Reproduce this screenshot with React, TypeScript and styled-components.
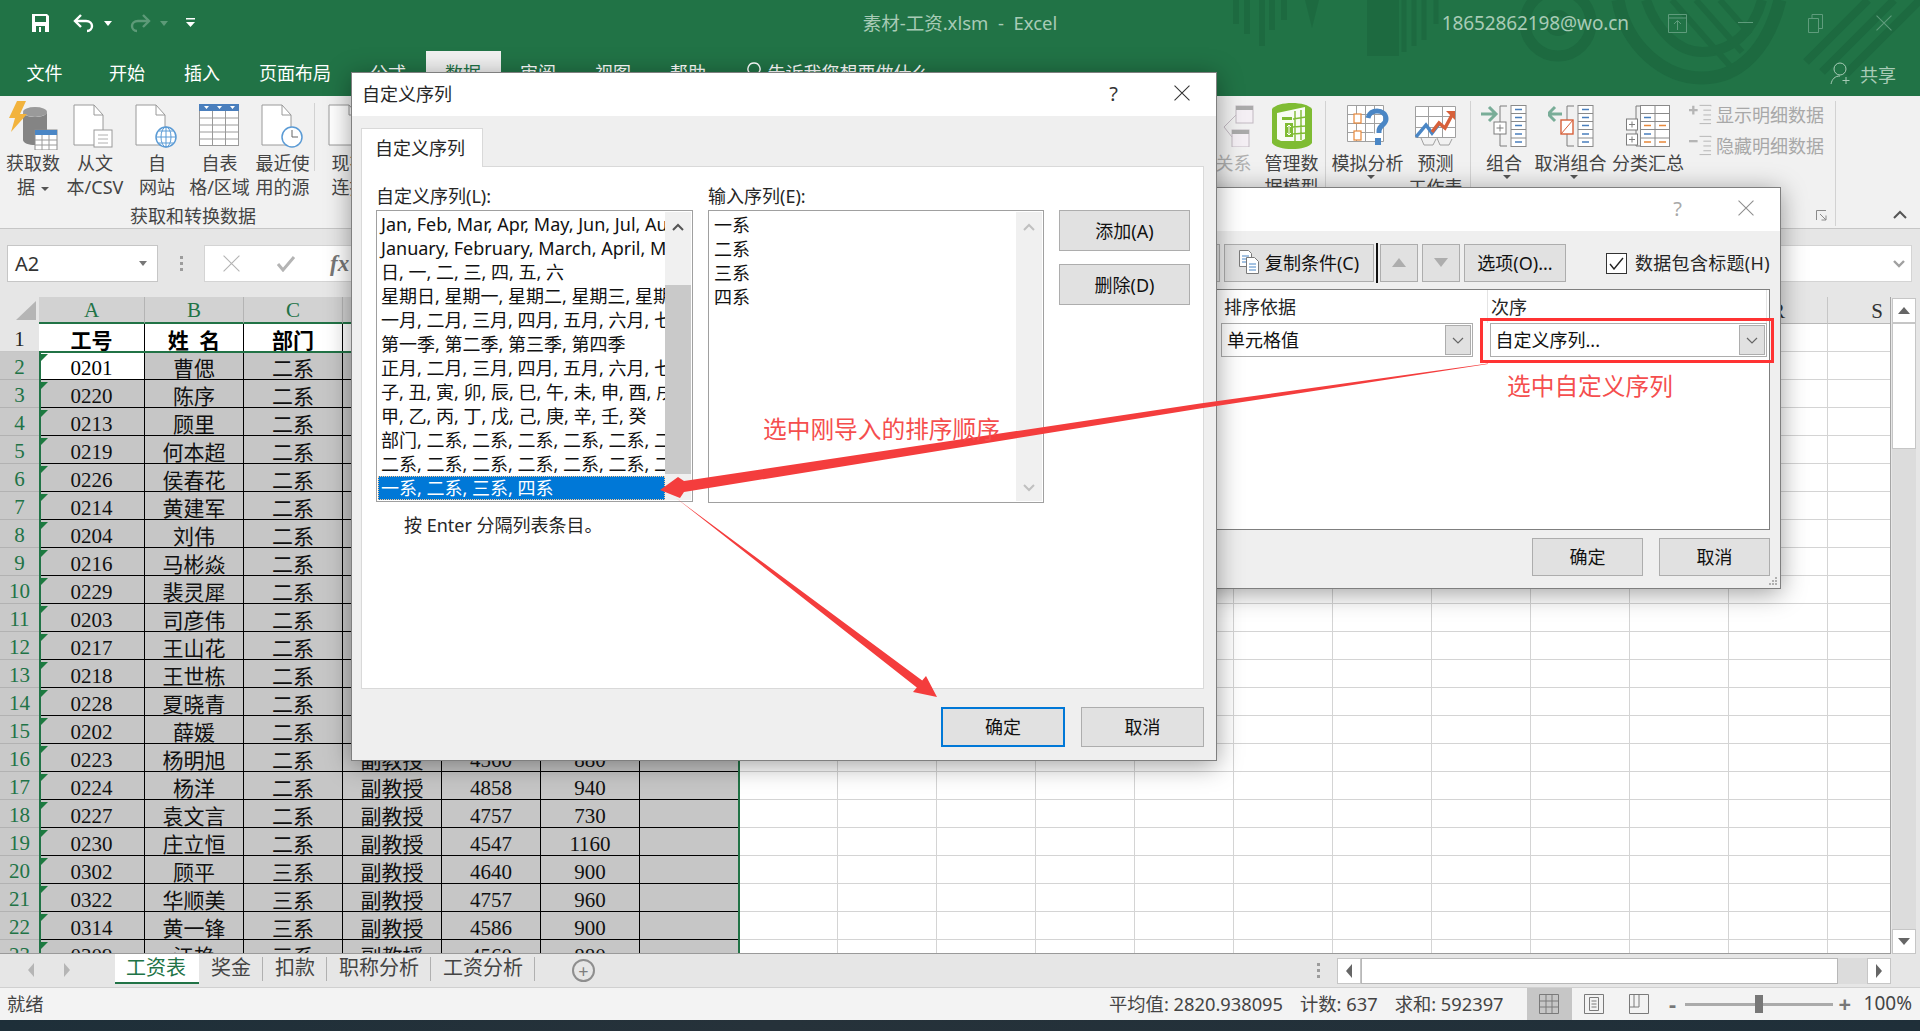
import React from "react";
import styled, { createGlobalStyle, css } from "styled-components";

const UI_FONT = `"Noto Sans", "Noto Sans CJK SC", sans-serif`;
const SHEET_FONT = `"Liberation Serif", "Noto Sans CJK SC", serif`;
const GREEN = "#217346";

const columns = ["A", "B", "C", "D", "E", "F", "G", "H", "I", "J", "K", "L", "M", "N", "O", "P", "Q", "R", "S"];

const rows = [
  ["0201", "曹偲", "二系", "", "", ""],
  ["0220", "陈序", "二系", "", "", ""],
  ["0213", "顾里", "二系", "", "", ""],
  ["0219", "何本超", "二系", "", "", ""],
  ["0226", "侯春花", "二系", "", "", ""],
  ["0214", "黄建军", "二系", "", "", ""],
  ["0204", "刘伟", "二系", "", "", ""],
  ["0216", "马彬焱", "二系", "", "", ""],
  ["0229", "裴灵犀", "二系", "", "", ""],
  ["0203", "司彦伟", "二系", "", "", ""],
  ["0217", "王山花", "二系", "", "", ""],
  ["0218", "王世栋", "二系", "", "", ""],
  ["0228", "夏晓青", "二系", "", "", ""],
  ["0202", "薛媛", "二系", "", "", ""],
  ["0223", "杨明旭", "二系", "副教授", "4560", "880"],
  ["0224", "杨洋", "二系", "副教授", "4858", "940"],
  ["0227", "袁文言", "二系", "副教授", "4757", "730"],
  ["0230", "庄立恒", "二系", "副教授", "4547", "1160"],
  ["0302", "顾平", "三系", "副教授", "4640", "900"],
  ["0322", "华顺美", "三系", "副教授", "4757", "960"],
  ["0314", "黄一锋", "三系", "副教授", "4586", "900"],
  ["0309", "江艳", "三系", "副教授", "4560", "880"],
];

const seriesList = [
  "Jan, Feb, Mar, Apr, May, Jun, Jul, Aug, Sep, Oct, Nov, Dec",
  "January, February, March, April, May, June, July",
  "日, 一, 二, 三, 四, 五, 六",
  "星期日, 星期一, 星期二, 星期三, 星期四, 星期五",
  "一月, 二月, 三月, 四月, 五月, 六月, 七月, 八月",
  "第一季, 第二季, 第三季, 第四季",
  "正月, 二月, 三月, 四月, 五月, 六月, 七月, 八月",
  "子, 丑, 寅, 卯, 辰, 巳, 午, 未, 申, 酉, 戌, 亥",
  "甲, 乙, 丙, 丁, 戊, 己, 庚, 辛, 壬, 癸",
  "部门, 二系, 二系, 二系, 二系, 二系, 二系, 二系",
  "二系, 二系, 二系, 二系, 二系, 二系, 二系, 二系",
  "一系, 二系, 三系, 四系",
];

const GlobalStyle = createGlobalStyle`
  html, body {
    margin: 0;
    padding: 0;
    background: #fff;
  }
  * {
    box-sizing: border-box;
  }
`;

const Page = styled.div`
  position: relative;
  display: flex;
  flex-direction: column;
  width: 1920px;
  height: 1031px;
  overflow: hidden;
  font-family: ${UI_FONT};
  font-size: 18px;
  color: #262626;
`;

/* ---------- green header ---------- */

const GreenHeader = styled.header`
  position: relative;
  height: 96px;
  background: ${GREEN};
`;

const HeaderPattern = styled.svg`
  position: absolute;
  right: 0;
  top: 0;
`;

const TitleBar = styled.div`
  position: relative;
  display: grid;
  grid-template-columns: 1fr auto 1fr;
  align-items: center;
  height: 46px;
`;

const QuickAccess = styled.div`
  display: flex;
  align-items: center;
  padding-left: 31px;
`;

const WindowTitle = styled.div`
  padding-bottom: 2px;
  font-size: 18.5px;
  white-space: pre;
  color: #a8cbb6;
`;

const WindowControls = styled.div`
  display: flex;
  align-items: center;
  justify-content: flex-end;
  color: #a8cbb6;
`;

const Account = styled.span`
  font-size: 19px;
  letter-spacing: -0.1px;
  margin-right: 39px;
`;

const MenuBar = styled.nav`
  position: relative;
  display: flex;
  align-items: flex-end;
  height: 50px;
  padding-left: 7px;
`;

const MenuItem = styled.div<{ $active?: boolean; $wide?: boolean }>`
  display: flex;
  align-items: center;
  height: 45px;
  padding: 0 ${(p) => (p.$wide ? 27 : 19.5)}px 3px 19.5px;
  font-size: 18px;
  color: #fff;
  ${(p) =>
    p.$active &&
    css`
      background: #f1f1f1;
      color: ${GREEN};
    `}
`;

const TellMe = styled.div`
  display: flex;
  align-items: center;
  gap: 4px;
  height: 45px;
  padding-bottom: 3px;
  margin-left: 18px;
  color: #fff;
`;

const Share = styled.div`
  display: flex;
  align-items: center;
  gap: 8px;
  height: 45px;
  margin-left: auto;
  padding-right: 24px;
  color: #a8cbb6;
`;

/* ---------- ribbon ---------- */

const Ribbon = styled.section`
  display: flex;
  height: 133px;
  background: #f1f1f1;
  border-bottom: 1px solid #c6c6c6;
`;

const RibbonGroup = styled.div`
  display: flex;
  flex-direction: column;
  padding-top: 4px;
`;

const RibbonButtons = styled.div`
  display: flex;
  height: 104px;
`;

const GroupLabel = styled.div`
  height: 24px;
  line-height: 24px;
  text-align: center;
  color: #444;
`;

const RibbonButton = styled.div<{ $width: number; $dim?: boolean }>`
  display: flex;
  flex-direction: column;
  align-items: center;
  width: ${(p) => p.$width}px;
  line-height: 24px;
  white-space: nowrap;
  color: ${(p) => (p.$dim ? "#b0b0b0" : "#444")};
`;

const RibbonIcon = styled.div`
  display: flex;
  align-items: center;
  justify-content: center;
  height: 51px;
`;

const DropCaret = styled.span`
  display: inline-block;
  width: 0;
  height: 0;
  margin-left: 6px;
  vertical-align: 3px;
  border-left: 4px solid transparent;
  border-right: 4px solid transparent;
  border-top: 4px solid #555;
`;

const RibbonSep = styled.div`
  align-self: flex-start;
  width: 1px;
  height: 125px;
  margin-top: 5px;
  background: #d2d2d2;
`;

const InnerSep = styled.div`
  flex: none;
  width: 1px;
  height: 68px;
  margin-top: 3px;
  background: #d2d2d2;
`;

const RibbonSpacer = styled.div`
  flex: 1;
`;

const OutlineColumn = styled.div`
  display: flex;
  flex-direction: column;
  gap: 7px;
  width: 135px;
  padding-top: 6px;
  color: #a8a8a8;
`;

const OutlineRow = styled.div`
  display: flex;
  align-items: center;
  gap: 4px;
  height: 24px;
  white-space: nowrap;
`;

const RibbonTail = styled.div`
  position: relative;
  display: flex;
  width: 84px;
`;

const TailIcon = styled.svg<{ $left: number }>`
  position: absolute;
  left: ${(p) => p.$left}px;
  top: 114px;
`;

/* ---------- formula bar ---------- */

const FormulaBar = styled.section`
  display: flex;
  height: 68px;
  padding: 16px 8px 15px 7px;
  background: #e6e6e6;
`;

const NameBox = styled.div`
  display: flex;
  align-items: center;
  justify-content: space-between;
  width: 151px;
  padding: 0 10px 0 7px;
  background: #fff;
  border: 1px solid #c6c6c6;
  font-size: 20px;
  color: #333;
`;

const TriangleDown = styled.span`
  width: 0;
  height: 0;
  border-left: 4px solid transparent;
  border-right: 4px solid transparent;
  border-top: 5px solid #777;
`;

const GripDots = styled.div`
  display: flex;
  flex-direction: column;
  align-items: center;
  justify-content: center;
  gap: 3px;
  width: 46px;
`;

const GripDot = styled.span`
  width: 3px;
  height: 3px;
  background: #9c9c9c;
`;

const FormulaInput = styled.div`
  display: flex;
  flex: 1;
  align-items: center;
  padding-left: 18px;
  background: #fff;
  border: 1px solid #d4d4d4;
`;

const FormulaFx = styled.span`
  margin-left: 34px;
  font-family: "Liberation Serif", serif;
  font-size: 23px;
  font-style: italic;
  font-weight: 700;
  color: #777;
`;

const FormulaChevron = styled.svg`
  margin-left: auto;
  margin-right: 6px;
`;

/* ---------- sheet ---------- */

const SheetArea = styled.section`
  display: flex;
  height: 657px;
  background: #e6e6e6;
`;

const GridWrap = styled.div`
  position: relative;
  width: 1891px;
  overflow: hidden;
  border-right: 1px solid #a6a6a6;
  border-bottom: 1px solid #9a9a9a;
`;

const Grid = styled.div`
  display: grid;
  grid-template-columns: 39px 106px repeat(18, 99px);
  grid-auto-rows: 28px;
  grid-template-rows: 27px;
  font-family: ${SHEET_FONT};
  font-size: 21px;
`;

const CornerCell = styled.div`
  display: flex;
  align-items: flex-end;
  justify-content: flex-end;
  padding: 0 3px 4px 0;
  background: #e6e6e6;
`;

const ColHead = styled.div<{ $selected: boolean }>`
  display: flex;
  align-items: center;
  justify-content: center;
  padding-top: 2px;
  background: ${(p) => (p.$selected ? "#d2d2d2" : "#e6e6e6")};
  border-right: 1px solid ${(p) => (p.$selected ? "#b4b4b4" : "#c6c6c6")};
  border-bottom: ${(p) => (p.$selected ? `2px solid ${GREEN}` : "1px solid #b8b8b8")};
  color: ${(p) => (p.$selected ? GREEN : "#333")};
`;

const RowHead = styled.div<{ $selected: boolean }>`
  display: flex;
  align-items: center;
  justify-content: center;
  padding-top: 4px;
  background: ${(p) => (p.$selected ? "#c9c9c9" : "#e6e6e6")};
  border-bottom: 1px solid ${(p) => (p.$selected ? "#b2b2b2" : "#c6c6c6")};
  color: ${(p) => (p.$selected ? GREEN : "#222")};
`;

const Cell = styled.div<{ $kind: "plain" | "head" | "data" | "active"; $flag?: boolean; $num?: boolean }>`
  position: relative;
  display: flex;
  align-items: center;
  justify-content: center;
  padding-top: ${(p) => (p.$num ? 5 : 2)}px;
  white-space: nowrap;
  overflow: hidden;
  ${(p) => p.$kind === "plain" && css`
    background: #fff;
    border-right: 1px solid #d4d4d4;
    border-bottom: 1px solid #d4d4d4;
  `}
  ${(p) => p.$kind === "head" && css`
    background: #fff;
    border-right: 1px solid #000;
    font-weight: 700;
    color: #000;
  `}
  ${(p) => p.$kind === "data" && css`
    background: #c6c6c6;
    border-right: 1px solid #000;
    border-bottom: 1px solid #000;
    color: #111;
  `}
  ${(p) => p.$kind === "active" && css`
    background: #fff;
    border-right: 1px solid #000;
    border-bottom: 1px solid #000;
    color: #000;
  `}
  ${(p) => p.$flag && css`
    &::before {
      content: "";
      position: absolute;
      left: 2px;
      top: 2px;
      border-top: 7px solid #1c7a3f;
      border-right: 7px solid transparent;
    }
  `}
`;

const SelectionFrame = styled.div`
  position: absolute;
  left: 39px;
  top: 54px;
  width: 701px;
  height: 640px;
  border: 2px solid ${GREEN};
  pointer-events: none;
`;

const VScroll = styled.div`
  display: flex;
  flex-direction: column;
  width: 29px;
  padding: 1px 4px 0 1px;
`;

const ScrollButton = styled.div`
  display: flex;
  align-items: center;
  justify-content: center;
  height: 25px;
  background: #fff;
  border: 1px solid #c6c6c6;
`;

const VTrack = styled.div`
  flex: 1;
  background: #dcdcdc;
`;

const VThumb = styled.div`
  height: 126px;
  background: #fff;
  border: 1px solid #c6c6c6;
`;

const ArrowUp = styled.span`
  border-left: 6px solid transparent;
  border-right: 6px solid transparent;
  border-bottom: 7px solid #666;
`;

const ArrowDown = styled.span`
  border-left: 6px solid transparent;
  border-right: 6px solid transparent;
  border-top: 7px solid #666;
`;

/* ---------- sheet tabs ---------- */

const TabBar = styled.section`
  display: flex;
  align-items: flex-start;
  height: 33px;
  background: #e6e6e6;
`;

const TabNav = styled.div`
  display: flex;
  align-items: center;
  justify-content: space-between;
  width: 115px;
  height: 32px;
  padding: 0 45px 0 28px;
`;

const NavArrow = styled.span<{ $right?: boolean }>`
  border-top: 7px solid transparent;
  border-bottom: 7px solid transparent;
  ${(p) => (p.$right ? "border-left: 6px solid #b5b5b5;" : "border-right: 6px solid #b5b5b5;")}
`;

const SheetTab = styled.div<{ $active?: boolean }>`
  height: 30px;
  padding: 0 11px 0 12px;
  line-height: 27px;
  font-size: 20px;
  white-space: nowrap;
  ${(p) =>
    p.$active
      ? css`
          width: 84px;
          padding: 0 11px;
          background: #fff;
          border-bottom: 2px solid ${GREEN};
          color: ${GREEN};
        `
      : css`
          margin-top: 3px;
          height: 24px;
          line-height: 22px;
          border-right: 1px solid #b0b0b0;
          color: #444;
        `}
`;

const AddSheet = styled.div`
  display: flex;
  align-items: center;
  justify-content: center;
  width: 23px;
  height: 23px;
  margin: 5px 0 0 37px;
  border: 2px solid #8e8e8e;
  border-radius: 50%;
  font-size: 18px;
  line-height: 1;
  color: #7d7d7d;
`;

const TabSplit = styled.div`
  display: flex;
  flex-direction: column;
  gap: 3px;
  margin: 9px 17px 0 auto;
`;

const HScroll = styled.div`
  display: flex;
  width: 554px;
  height: 26px;
  margin: 4px 29px 0 0;
  background: #dcdcdc;
`;

const HButton = styled.div`
  display: flex;
  align-items: center;
  justify-content: center;
  width: 24px;
  background: #fff;
  border: 1px solid #c6c6c6;
`;

const HThumb = styled.div`
  width: 477px;
  background: #fff;
  border: 1px solid #b8b8b8;
`;

const HTrackRest = styled.div`
  flex: 1;
`;

/* ---------- status bar ---------- */

const StatusBar = styled.footer`
  display: flex;
  align-items: center;
  height: 33px;
  padding: 0 0 3px 7px;
  background: #f3f3f3;
  border-top: 1px solid #d0d0d0;
  font-size: 18.3px;
  color: #444;
`;

const StatusStat = styled.span<{ $first?: boolean }>`
  margin-left: ${(p) => (p.$first ? "auto" : "17px")};
  white-space: nowrap;
`;

const ViewButton = styled.div<{ $active?: boolean; $first?: boolean }>`
  display: flex;
  align-items: center;
  justify-content: center;
  width: 45px;
  height: 32px;
  margin-bottom: -3px;
  margin-left: ${(p) => (p.$first ? "23px" : "0")};
  background: ${(p) => (p.$active ? "#c6c6c6" : "transparent")};
`;

const ZoomSign = styled.span`
  width: 12px;
  text-align: center;
  font-size: 22px;
  font-weight: 700;
  color: #777;
`;

const ZoomSlider = styled.div`
  position: relative;
  width: 148px;
  height: 3px;
  margin: 3px 6px 0;
  background: #aaa;
`;

const ZoomThumb = styled.span`
  position: absolute;
  left: 70px;
  top: -8px;
  width: 8px;
  height: 18px;
  background: #777;
`;

const ZoomValue = styled.span`
  margin: 0 8px 0 13px;
  font-size: 19px;
`;

const Taskbar = styled.div`
  display: flex;
  justify-content: flex-end;
  height: 11px;
  padding: 7px 7px 0 0;
  overflow: hidden;
  background: linear-gradient(90deg, #1e2f39 0%, #26323a 40%, #1f2f39 100%);
  font-size: 15px;
  line-height: 18px;
  color: #e8e8e8;
`;

const Clock = styled.span`
  margin-right: 116px;
`;

/* ---------- dialogs ---------- */

const Dialog = styled.div<{ $left: number; $top: number; $width: number; $height: number }>`
  position: absolute;
  left: ${(p) => p.$left}px;
  top: ${(p) => p.$top}px;
  width: ${(p) => p.$width}px;
  height: ${(p) => p.$height}px;
  display: flex;
  flex-direction: column;
  background: #efefef;
  border: 1px solid #7f7f7f;
  box-shadow: 0 4px 24px rgba(0, 0, 0, 0.38);
`;

const DialogHead = styled.div`
  display: flex;
  align-items: center;
  flex: none;
  height: 43px;
  padding: 0 26px 3px 10px;
  background: #fff;
  font-size: 18px;
  color: #262626;
`;

const HelpMark = styled.span<{ $dim?: boolean }>`
  margin-left: auto;
  margin-right: 56px;
  font-size: 20px;
  color: ${(p) => (p.$dim ? "#a9a9a9" : "#333")};
`;

const ListDialogBody = styled.div`
  display: flex;
  flex-direction: column;
  flex: 1;
  padding: 12px 12px 12px 9px;
`;

const TabHead = styled.div`
  width: 122px;
  height: 39px;
  padding-left: 13px;
  line-height: 38px;
  background: #fff;
  border: 1px solid #d9d9d9;
  border-bottom: 0;
  position: relative;
  z-index: 1;
`;

const TabPanel = styled.div`
  height: 523px;
  margin-top: -1px;
  padding: 17px 12px 0 14px;
  background: #fff;
  border: 1px solid #d9d9d9;
`;

const ListsRow = styled.div`
  display: flex;
`;

const ListColumn = styled.div<{ $width: number }>`
  width: ${(p) => p.$width}px;
  margin-right: 15px;
`;

const FieldLabel = styled.div`
  height: 26px;
  line-height: 24px;
  color: #262626;
`;

const ListBox = styled.div<{ $height: number }>`
  display: flex;
  height: ${(p) => p.$height}px;
  padding: 1px;
  border: 1px solid #a0a0a0;
  background: #fff;
  overflow: hidden;
`;

const ListItems = styled.div`
  flex: 1;
  min-width: 0;
  overflow: hidden;
`;

const ListItem = styled.div<{ $selected?: boolean }>`
  height: 24px;
  padding-left: 3px;
  line-height: 25px;
  font-size: 18px;
  white-space: nowrap;
  overflow: hidden;
  color: ${(p) => (p.$selected ? "#fff" : "#111")};
  ${(p) =>
    p.$selected &&
    css`
      background: #0078d7;
      outline: 1px dotted #ffc890;
      outline-offset: -1px;
    `}
`;

const EntryItem = styled.div`
  height: 24px;
  padding-left: 4px;
  line-height: 26px;
  font-size: 18px;
  color: #111;
`;

const ListScroll = styled.div`
  display: flex;
  flex-direction: column;
  align-items: center;
  flex: none;
  width: 26px;
  background: #f0f0f0;
`;

const ListScrollGap = styled.div<{ $height: number; $pad: number }>`
  display: flex;
  justify-content: center;
  align-items: flex-start;
  flex: none;
  width: 100%;
  height: ${(p) => p.$height}px;
  padding-top: ${(p) => p.$pad}px;
`;

const ListThumb = styled.div`
  flex: none;
  width: 100%;
  height: 189px;
  background: #c9c9c9;
`;

const ScrollRest = styled.div`
  flex: 1;
`;

const SideButtons = styled.div`
  display: flex;
  flex-direction: column;
  gap: 13px;
  padding-top: 26px;
`;

const PushButton = styled.div<{ $width: number; $height: number; $focus?: boolean }>`
  display: flex;
  align-items: center;
  justify-content: center;
  flex: none;
  gap: 6px;
  width: ${(p) => p.$width}px;
  height: ${(p) => p.$height}px;
  padding-bottom: 2px;
  background: #e1e1e1;
  border: ${(p) => (p.$focus ? "2px solid #0078d7" : "1px solid #adadad")};
  font-size: 18px;
  color: #111;
`;

const Hint = styled.div`
  padding: 9px 0 0 28px;
  font-size: 18px;
  color: #262626;
`;

const DialogFooter = styled.div<{ $gap: number; $pad: number }>`
  display: flex;
  justify-content: flex-end;
  gap: ${(p) => p.$gap}px;
  padding-top: ${(p) => p.$pad}px;
`;

const SortBody = styled.div`
  display: flex;
  flex-direction: column;
  flex: 1;
  padding: 13px 10px 0 0;
`;

const SortToolbar = styled.div`
  display: flex;
  align-items: center;
  gap: 4px;
  height: 38px;
  padding-left: 79px;
`;

const ToolSep = styled.div`
  width: 2px;
  height: 40px;
  margin: 0 -2px 0 -2px;
  background: #111;
`;

const CheckRow = styled.div`
  display: flex;
  align-items: center;
  gap: 8px;
  margin-left: 36px;
  padding-bottom: 2px;
  white-space: nowrap;
  letter-spacing: 0.3px;
  color: #262626;
`;

const CheckBox = styled.div`
  display: flex;
  align-items: center;
  justify-content: center;
  width: 21px;
  height: 21px;
  margin-top: 2px;
  background: #fff;
  border: 1px solid #333;
`;

const SortTable = styled.div`
  height: 241px;
  margin: 7px 0 0 210px;
  padding: 0 2px 0 9px;
  background: #fff;
  border: 1px solid #7f7f7f;
`;

const SortHeadRow = styled.div`
  display: flex;
  height: 33px;
  line-height: 34px;
`;

const SortHeadCell = styled.div<{ $width: number }>`
  width: ${(p) => p.$width}px;
  padding-left: 3px;
  border-right: 1px solid #e4e4e4;
`;

const SortSelects = styled.div`
  display: flex;
  gap: 17px;
`;

const SortSelect = styled.div<{ $width: number }>`
  display: flex;
  align-items: center;
  justify-content: space-between;
  width: ${(p) => p.$width}px;
  height: 34px;
  padding: 0 1px 0 5px;
  background: #fff;
  border: 1px solid #adadad;
  color: #111;
`;

const SelectValue = styled.span`
  padding-bottom: 3px;
`;

const SelectButton = styled.div`
  display: flex;
  align-items: center;
  justify-content: center;
  width: 26px;
  height: 30px;
  background: #e1e1e1;
  border: 1px solid #adadad;
`;

const ResizeGrip = styled.svg`
  position: absolute;
  right: 2px;
  bottom: 2px;
`;

/* ---------- annotations ---------- */

const ArrowLayer = styled.svg`
  position: absolute;
  left: 0;
  top: 0;
  pointer-events: none;
`;

const RedBox = styled.div`
  position: absolute;
  left: 1480px;
  top: 318px;
  width: 294px;
  height: 45px;
  border: 3px solid #f33;
`;

const RedNote = styled.div<{ $left: number; $top: number }>`
  position: absolute;
  left: ${(p) => p.$left}px;
  top: ${(p) => p.$top}px;
  font-size: 23.7px;
  line-height: 30px;
  white-space: nowrap;
  color: #f54e4e;
`;

/* ---------- icons ---------- */

const SaveIcon = () => (
  <svg width="19" height="20" viewBox="0 0 19 20" fill="none">
    <path d="M1 1h15l2 2v16H1z" fill="#fff" />
    <rect x="4" y="3" width="11" height="6" fill={GREEN} />
    <rect x="5" y="13" width="9" height="6" fill={GREEN} />
    <rect x="8" y="14" width="2" height="5" fill="#fff" />
  </svg>
);

const UndoIcon = ({ dim }: { dim?: boolean }) => (
  <svg width="24" height="20" viewBox="0 0 24 20" fill="none" stroke={dim ? "#5d9a78" : "#fff"} strokeWidth="2.4" style={{ transform: dim ? "scaleX(-1)" : undefined }}>
    <path d="M9 2 3 8l6 6" />
    <path d="M3 8h11c4 0 6 2.5 6 5s-2 5-5 5" />
  </svg>
);

const QatCaret = ({ dim }: { dim?: boolean }) => (
  <svg width="8" height="5" viewBox="0 0 8 5" style={{ margin: "0 16px 0 8px" }}>
    <path d="M0 0h8L4 5z" fill={dim ? "#5d9a78" : "#fff"} />
  </svg>
);

const CustomizeIcon = () => (
  <svg width="9" height="10" viewBox="0 0 9 10" style={{ marginLeft: 2 }}>
    <rect width="9" height="1.5" fill="#fff" />
    <path d="M0 4h9L4.5 9z" fill="#fff" />
  </svg>
);

const HeaderArt = () => (
  <HeaderPattern width="720" height="96" viewBox="1200 0 720 96" fill="none" stroke="#1d6a40">
    <g strokeWidth="6">
      <path d="M1236 0v24M1247 0v34M1262 0v46M1272 0v30M1284 0v20" />
    </g>
    <path d="M1305 0h14l-7 28z" fill="#1d6a40" stroke="none" />
    <path d="M1367 0h32v56h-32z" fill="#1d6a40" stroke="none" />
    <path d="M1404 0v52M1414 0v46M1424 0v40M1436 0v24" strokeWidth="5" />
    <circle cx="1558" cy="23" r="33" strokeWidth="11" />
    <circle cx="1558" cy="23" r="10" strokeWidth="6" />
    <path d="M1618 0c8 46 46 78 84 78s66-30 78-78" strokeWidth="13" />
    <path d="M1646 0c10 30 32 52 56 52 30 0 52-22 60-52" strokeWidth="10" />
    <path d="M1672 0l58 66M1696 0l46 52M1720 0l30 34" strokeWidth="6" />
    <path d="M1806 62 1868 0M1822 72 1894 0M1846 74 1920 0" strokeWidth="8" />
  </HeaderPattern>
);

const DocIcon = ({ children }: { children?: React.ReactNode }) => (
  <svg width="44" height="44" viewBox="0 0 44 44" fill="none">
    <path d="M1 1h20l9 10v30H1z" fill="#fff" stroke="#9a9a9a" />
    <path d="M21 1v10h9" stroke="#9a9a9a" />
    {children}
  </svg>
);

const GetDataIcon = () => (
  <svg width="50" height="49" viewBox="0 0 50 49" fill="none">
    <ellipse cx="27" cy="11" rx="12" ry="5" fill="#9a9a9a" />
    <path d="M15 11v28c0 3 6 5 12 5s12-2 12-5V11c0 3-6 5-12 5s-12-2-12-5z" fill="#848484" />
    <path d="M9 0h9l-6 13h7L3 31l4-14H1z" fill="#f2b33d" />
    <rect x="27" y="29" width="22" height="20" fill="#fff" stroke="#8c8c8c" />
    <rect x="27" y="29" width="22" height="5" fill="#4a86c5" />
    <path d="M34 34v15M41 34v15M27 39h22M27 44h22" stroke="#9a9a9a" />
  </svg>
);

const TableIcon = () => (
  <svg width="41" height="43" viewBox="0 0 41 43" fill="none" stroke="#9a9a9a">
    <rect x=".5" y=".5" width="39" height="41" fill="#fff" />
    <rect x="0" y="0" width="40" height="7" fill="#4a7fbd" stroke="none" />
    <path d="M13.5 7v35M26.5 7v35M0 14h40M0 21h40M0 28h40M0 35h40" />
    <path d="M5 2h5L7.500 5zM18 2h5l-2.500 3zM31 2h5l-2.500 3z" fill="#fff" stroke="none" />
  </svg>
);

const RelationIcon = () => (
  <svg width="40" height="42" viewBox="0 0 40 42" fill="none" stroke="#c2b9c2">
    <rect x="22" y="1" width="17" height="17" fill="#f4eff4" />
    <rect x="22" y="1" width="17" height="4" fill="#aaa" stroke="none" />
    <rect x="18" y="25" width="17" height="17" fill="#f4eff4" />
    <rect x="18" y="25" width="17" height="4" fill="#aaa" stroke="none" />
    <path d="M22 10 10 22l8 10" />
  </svg>
);

const ModelIcon = () => (
  <svg width="42" height="46" viewBox="0 0 42 46" fill="none">
    <path d="M1 6C4 2 12 0 21 0s17 2 20 6v34c-3 4-11 6-20 6S4 44 1 40z" fill="#7fbc33" />
    <path d="M6 10 34 4v32l-4 2H10l-4-2z" fill="#fff" opacity=".95" />
    <path d="M24 8v30M30 7v30M22 16l13-2M22 24l13-1M22 31l13-1" stroke="#7fbc33" strokeWidth="1.400" />
    <path d="M11 14h10v3H11zM14 20h8v14H14z" fill="#7fbc33" />
    <path d="M18 22v10M16 24l2-2 2 2M16 30l2 2 2-2" stroke="#fff" />
  </svg>
);

const WhatIfIcon = () => (
  <svg width="42" height="41" viewBox="0 0 42 41" fill="none" stroke="#a0a0a0">
    <path d="M.5.5h36v36H.5zM9.500.5v36M18.500.5v36M27.500.5v28M.5 9.500h36M.5 18.500h36M.5 27.500h26" fill="#fff" />
    <rect x="7" y="9" width="7" height="9" fill="#fff" stroke="#e8883a" strokeWidth="1.200" />
    <rect x="7" y="26" width="7" height="9" fill="#fff" stroke="#e8883a" strokeWidth="1.200" />
    <path d="M21 13c1-5 5-7 9-7 5 0 9 3 9 8 0 6-7 6-7 12v2" stroke="#4a86c5" strokeWidth="5" />
    <rect x="28" y="33" width="6" height="7" fill="#4a86c5" stroke="none" />
  </svg>
);

const ForecastIcon = () => (
  <svg width="42" height="42" viewBox="0 0 42 42" fill="none" stroke="#a0a0a0">
    <path d="M.5 1.500h40v31H.5zM.5 11.500h40M.5 22.500h40M13.500 1.500v31M27.500 1.500v31" fill="#fff" />
    <path d="M1 32 11 20l6 8 7-9" stroke="#4a86c5" strokeWidth="3.500" />
    <path d="M17 27l7-9 6 5 7-13" stroke="#d7603a" strokeWidth="3.500" />
    <path d="M31 6h9v9z" fill="#d7603a" stroke="none" />
    <path d="M6 33l3 7h9l3-6M22 33l3 7h9l3-6" />
  </svg>
);

const GroupIcon = ({ ungroup }: { ungroup?: boolean }) => (
  <svg width="46" height="42" viewBox="0 0 46 42" fill="none">
    {ungroup ? (
      <path d="M0 9h14M7 2 0 9l7 7" stroke="#79ad98" strokeWidth="3" />
    ) : (
      <path d="M0 9h14M8 2l7 7-7 7" stroke="#79ad98" strokeWidth="3" />
    )}
    <path d="M26 1h-7v40h7" stroke="#7d7d7d" />
    <rect x="30" y=".5" width="15" height="41" fill="#fff" stroke="#8a8a8a" />
    <path d="M30 8.500h15M30 16.500h15M30 24.500h15M30 33h15" stroke="#8a8a8a" />
    <path d="M34 4.500h7M34 12.500h7M34 20.500h7M34 29h7M34 37h7" stroke="#4a7fbd" strokeWidth="1.500" />
    {ungroup ? (
      <g>
        <rect x="13" y="15" width="12" height="14" fill="#fff" stroke="#d7603a" strokeWidth="1.400" />
        <path d="M13 29 25 15" stroke="#d7603a" />
      </g>
    ) : (
      <g>
        <rect x="13" y="17" width="12" height="12" fill="#fff" stroke="#7d7d7d" />
        <path d="M15.500 23h7M19 19.500v7" stroke="#7d7d7d" />
      </g>
    )}
  </svg>
);

const SubtotalIcon = () => (
  <svg width="44" height="42" viewBox="0 0 44 42" fill="none">
    <path d="M14 1H10v40h4" stroke="#7d7d7d" />
    <rect x="14.500" y=".5" width="29" height="41" fill="#fff" stroke="#8a8a8a" />
    <path d="M14.500 8.500h29M14.500 16.500h29M14.500 24.500h29M14.500 33h29M29 .5v41" stroke="#8a8a8a" />
    <path d="M18 12.500h7M18 29h7" stroke="#4a7fbd" strokeWidth="1.500" />
    <path d="M18 20.500h7M33 20.500h7M18 37h7M33 37h7" stroke="#e8883a" strokeWidth="1.500" />
    <rect x=".5" y="14" width="11" height="11" fill="#fff" stroke="#7d7d7d" />
    <rect x=".5" y="29" width="11" height="11" fill="#fff" stroke="#7d7d7d" />
    <path d="M3 19.500h6M6 16.500v6M3 34.500h6M6 31.500v6" stroke="#7d7d7d" />
  </svg>
);

const OutlineIcon = ({ minus }: { minus?: boolean }) => (
  <svg width="24" height="24" viewBox="0 0 24 24" fill="none">
    <path d={minus ? "M0 8h9" : "M0 8h9M4.500 3.500v9"} stroke="#b5b5b5" strokeWidth="2.400" />
    <path d="M11 3h12v1M15 8h8M15 13h8M15 18h8M11 22h12" stroke="#b5b5b5" />
  </svg>
);

const LightBulb = () => (
  <svg width="20" height="22" viewBox="0 0 20 22" fill="none" stroke="#fff" strokeWidth="1.400">
    <path d="M10 2a6 6 0 0 0-4 10.500c1 1 1.500 2 1.500 3.500h5c0-1.500.5-2.500 1.500-3.500A6 6 0 0 0 10 2zM8 19h4" />
  </svg>
);

const Chevron = ({ color = "#666" }: { color?: string }) => (
  <svg width="12" height="7" viewBox="0 0 12 7" fill="none" stroke={color} strokeWidth="1.200">
    <path d="M1 1l5 5 5-5" />
  </svg>
);

const CloseCross = ({ color = "#333", size = 15 }: { color?: string; size?: number }) => (
  <svg width={size} height={size} viewBox="0 0 15 15" fill="none" stroke={color}>
    <path d="M.5.5l14 14M14.500.5l-14 14" />
  </svg>
);

const ListUp = ({ color = "#555" }: { color?: string }) => (
  <svg width="12" height="8" viewBox="0 0 12 8" fill="none" stroke={color} strokeWidth="2">
    <path d="M1 7l5-5 5 5" />
  </svg>
);

const ListDown = ({ color = "#555" }: { color?: string }) => (
  <svg width="12" height="8" viewBox="0 0 12 8" fill="none" stroke={color} strokeWidth="2">
    <path d="M1 1l5 5 5-5" />
  </svg>
);

/* ---------- parts ---------- */

const Header = () => (
  <GreenHeader>
    <HeaderArt />
    <TitleBar>
      <QuickAccess>
        <SaveIcon />
        <span style={{ width: 22 }} />
        <UndoIcon />
        <QatCaret />
        <UndoIcon dim />
        <QatCaret dim />
        <CustomizeIcon />
      </QuickAccess>
      <WindowTitle>{"素材-工资.xlsm  -  Excel"}</WindowTitle>
      <WindowControls>
        <Account>18652862198@wo.cn</Account>
        <svg width="19" height="19" viewBox="0 0 19 19" fill="none" stroke="#5f9c7c" style={{ marginRight: 51 }}>
          <path d="M.5.5h18v18H.5zM.5 4h18M9.500 16V7M6 10l3.500-3.500L13 10" />
        </svg>
        <svg width="15" height="2" viewBox="0 0 15 2" style={{ marginRight: 55 }}>
          <rect width="15" height="1" fill="#5f9c7c" />
        </svg>
        <svg width="15" height="19" viewBox="0 0 15 19" fill="none" stroke="#5f9c7c" style={{ marginRight: 53 }}>
          <path d="M.5 4.500h10v14H.5zM4 4.500V.5h10.500v14h-4" />
        </svg>
        <span style={{ marginRight: 28, display: "flex" }}>
          <CloseCross color="#5f9c7c" size={16} />
        </span>
      </WindowControls>
    </TitleBar>
    <MenuBar>
      <MenuItem $wide>文件</MenuItem>
      <MenuItem>开始</MenuItem>
      <MenuItem>插入</MenuItem>
      <MenuItem>页面布局</MenuItem>
      <MenuItem>公式</MenuItem>
      <MenuItem $active>数据</MenuItem>
      <MenuItem>审阅</MenuItem>
      <MenuItem>视图</MenuItem>
      <MenuItem>帮助</MenuItem>
      <TellMe>
        <LightBulb />
        告诉我您想要做什么
      </TellMe>
      <Share>
        <svg width="22" height="23" viewBox="0 0 22 23" fill="none" stroke="#a8cbb6">
          <circle cx="10" cy="7" r="6" />
          <path d="M1 22c1-5 4-8 9-8M16 15v7M12.500 18.500h7" />
        </svg>
        共享
      </Share>
    </MenuBar>
  </GreenHeader>
);

const RibbonSection = () => (
  <Ribbon>
    <RibbonGroup style={{ paddingLeft: 2 }}>
      <RibbonButtons>
        <RibbonButton $width={62}>
          <RibbonIcon>
            <GetDataIcon />
          </RibbonIcon>
          获取数
          <span>
            据<DropCaret />
          </span>
        </RibbonButton>
        <RibbonButton $width={62}>
          <RibbonIcon>
            <DocIcon>
              <rect x="21" y="26" width="18" height="17" fill="#fff" stroke="#9a9a9a" />
              <path d="M25 31h10M25 35h10M25 39h10" stroke="#b0b0b0" />
            </DocIcon>
          </RibbonIcon>
          从文
          <span>本/CSV</span>
        </RibbonButton>
        <RibbonButton $width={62}>
          <RibbonIcon>
            <DocIcon>
              <circle cx="31" cy="33" r="10" fill="#fff" stroke="#5b9bd5" strokeWidth="1.500" />
              <path d="M21 33h20M31 23v20M24 27h14M24 39h14" stroke="#5b9bd5" />
              <ellipse cx="31" cy="33" rx="5" ry="10" stroke="#5b9bd5" />
            </DocIcon>
          </RibbonIcon>
          自
          <span>网站</span>
        </RibbonButton>
        <RibbonButton $width={63}>
          <RibbonIcon>
            <TableIcon />
          </RibbonIcon>
          自表
          <span>格/区域</span>
        </RibbonButton>
        <RibbonButton $width={63}>
          <RibbonIcon>
            <DocIcon>
              <circle cx="31" cy="33" r="10" fill="#fff" stroke="#5b9bd5" strokeWidth="1.500" />
              <path d="M31 26v7h6" stroke="#666" />
            </DocIcon>
          </RibbonIcon>
          最近使
          <span>用的源</span>
        </RibbonButton>
        <InnerSep />
        <RibbonButton $width={69}>
          <RibbonIcon>
            <DocIcon />
          </RibbonIcon>
          现有
          <span>连接</span>
        </RibbonButton>
      </RibbonButtons>
      <GroupLabel>获取和转换数据</GroupLabel>
    </RibbonGroup>
    <RibbonSpacer />
    <RibbonGroup>
      <RibbonButtons>
        <RibbonButton $width={57} $dim>
          <RibbonIcon>
            <RelationIcon />
          </RibbonIcon>
          关系
        </RibbonButton>
        <RibbonButton $width={59}>
          <RibbonIcon>
            <ModelIcon />
          </RibbonIcon>
          管理数
          <span>据模型</span>
        </RibbonButton>
      </RibbonButtons>
    </RibbonGroup>
    <RibbonSep style={{ marginRight: 4, marginLeft: 4 }} />
    <RibbonGroup>
      <RibbonButtons>
        <RibbonButton $width={75}>
          <RibbonIcon>
            <WhatIfIcon />
          </RibbonIcon>
          模拟分析
          <DropCaret />
        </RibbonButton>
        <RibbonButton $width={61}>
          <RibbonIcon>
            <ForecastIcon />
          </RibbonIcon>
          预测
          <span>工作表</span>
        </RibbonButton>
      </RibbonButtons>
    </RibbonGroup>
    <RibbonSep style={{ marginRight: 3, marginLeft: 4 }} />
    <RibbonGroup>
      <RibbonButtons>
        <RibbonButton $width={60}>
          <RibbonIcon>
            <GroupIcon />
          </RibbonIcon>
          组合
          <DropCaret />
        </RibbonButton>
        <RibbonButton $width={73}>
          <RibbonIcon>
            <GroupIcon ungroup />
          </RibbonIcon>
          取消组合
          <DropCaret />
        </RibbonButton>
        <RibbonButton $width={82}>
          <RibbonIcon>
            <SubtotalIcon />
          </RibbonIcon>
          分类汇总
        </RibbonButton>
      </RibbonButtons>
    </RibbonGroup>
    <OutlineColumn>
      <OutlineRow>
        <OutlineIcon />
        显示明细数据
      </OutlineRow>
      <OutlineRow>
        <OutlineIcon minus />
        隐藏明细数据
      </OutlineRow>
    </OutlineColumn>
    <RibbonSep style={{ marginLeft: 11 }} />
    <RibbonTail>
      <TailIcon $left={-20} width="11" height="11" viewBox="0 0 11 11" fill="none" stroke="#8a8a8a">
        <path d="M.5 10V.5H10M4 4l6 6M10 5.500V10H5.500" />
      </TailIcon>
      <TailIcon $left={57} width="14" height="9" viewBox="0 0 14 9" fill="none" stroke="#555" strokeWidth="2">
        <path d="M1 8l6-6 6 6" />
      </TailIcon>
    </RibbonTail>
  </Ribbon>
);

const FormulaSection = () => (
  <FormulaBar>
    <NameBox>
      A2
      <TriangleDown />
    </NameBox>
    <GripDots>
      <GripDot />
      <GripDot />
      <GripDot />
    </GripDots>
    <FormulaInput>
      <CloseCross color="#b4b4b4" size={17} />
      <svg width="20" height="17" viewBox="0 0 20 17" fill="none" stroke="#b4b4b4" strokeWidth="3" style={{ marginLeft: 36 }}>
        <path d="M2 9l5 6L18 2" />
      </svg>
      <FormulaFx>fx</FormulaFx>
      <FormulaChevron width="12" height="8" viewBox="0 0 12 8" fill="none" stroke="#a0a0a0" strokeWidth="2.400">
        <path d="M1 1l5 5 5-5" />
      </FormulaChevron>
    </FormulaInput>
  </FormulaBar>
);

const SheetSection = () => (
  <SheetArea>
    <GridWrap>
      <Grid>
        <CornerCell>
          <svg width="20" height="19" viewBox="0 0 20 19">
            <path d="M20 0v19H0z" fill="#b5b5b5" />
          </svg>
        </CornerCell>
        {columns.map((col, i) => (
          <ColHead key={col} $selected={i < 7}>
            {col}
          </ColHead>
        ))}

        <RowHead $selected={false}>1</RowHead>
        <Cell $kind="head">工号</Cell>
        <Cell $kind="head">姓&nbsp;&nbsp;名</Cell>
        <Cell $kind="head">部门</Cell>
        <Cell $kind="head" />
        <Cell $kind="head" />
        <Cell $kind="head" />
        <Cell $kind="head" />
        {columns.slice(7).map((col) => (
          <Cell key={col} $kind="plain" />
        ))}

        {rows.map((row, r) => (
          <React.Fragment key={r}>
            <RowHead $selected>{r + 2}</RowHead>
            <Cell $kind={r === 0 ? "active" : "data"} $flag $num>
              {row[0]}
            </Cell>
            <Cell $kind="data">{row[1]}</Cell>
            <Cell $kind="data">{row[2]}</Cell>
            <Cell $kind="data">{row[3]}</Cell>
            <Cell $kind="data" $num>
              {row[4]}
            </Cell>
            <Cell $kind="data" $num>
              {row[5]}
            </Cell>
            <Cell $kind="data" />
            {columns.slice(7).map((col) => (
              <Cell key={col} $kind="plain" />
            ))}
          </React.Fragment>
        ))}
      </Grid>
      <SelectionFrame />
    </GridWrap>
    <VScroll>
      <ScrollButton>
        <ArrowUp />
      </ScrollButton>
      <VThumb />
      <VTrack />
      <ScrollButton>
        <ArrowDown />
      </ScrollButton>
    </VScroll>
  </SheetArea>
);

const TabsSection = () => (
  <TabBar>
    <TabNav>
      <NavArrow />
      <NavArrow $right />
    </TabNav>
    <SheetTab $active>工资表</SheetTab>
    <SheetTab>奖金</SheetTab>
    <SheetTab>扣款</SheetTab>
    <SheetTab>职称分析</SheetTab>
    <SheetTab>工资分析</SheetTab>
    <AddSheet>+</AddSheet>
    <TabSplit>
      <GripDot />
      <GripDot />
      <GripDot />
    </TabSplit>
    <HScroll>
      <HButton>
        <NavArrow style={{ borderRightColor: "#666" }} />
      </HButton>
      <HThumb />
      <HTrackRest />
      <HButton>
        <NavArrow $right style={{ borderLeftColor: "#666" }} />
      </HButton>
    </HScroll>
  </TabBar>
);

const StatusSection = () => (
  <StatusBar>
    就绪
    <StatusStat $first>平均值: 2820.938095</StatusStat>
    <StatusStat>计数: 637</StatusStat>
    <StatusStat>求和: 592397</StatusStat>
    <ViewButton $active $first>
      <svg width="20" height="20" viewBox="0 0 20 20" fill="none" stroke="#7a7a7a">
        <path d="M.5.5h19v19H.5zM7 .5v19M13 .5v19M.5 7h19M.5 13h19" />
      </svg>
    </ViewButton>
    <ViewButton>
      <svg width="20" height="20" viewBox="0 0 20 20" fill="none" stroke="#7a7a7a">
        <path d="M.5.5h19v19H.5zM5.500 3.500h9v13h-9zM7.500 7h5M7.500 10h5M7.500 13h5" />
      </svg>
    </ViewButton>
    <ViewButton>
      <svg width="20" height="20" viewBox="0 0 20 20" fill="none" stroke="#7a7a7a">
        <path d="M.5.5h19v19H.5zM.5 13H10V.5M5 .5V13" />
      </svg>
    </ViewButton>
    <span style={{ width: 5 }} />
    <ZoomSign>-</ZoomSign>
    <ZoomSlider>
      <ZoomThumb />
    </ZoomSlider>
    <ZoomSign>+</ZoomSign>
    <ZoomValue>100%</ZoomValue>
  </StatusBar>
);

const SortDialog = () => (
  <Dialog $left={1000} $top={187} $width={781} $height={402}>
    <DialogHead>
      <HelpMark $dim>?</HelpMark>
      <CloseCross color="#8e8e8e" size={16} />
    </DialogHead>
    <SortBody>
      <SortToolbar>
        <PushButton $width={140} $height={38}>
          删除条件(D)
        </PushButton>
        <PushButton $width={150} $height={38}>
          <svg width="20" height="24" viewBox="0 0 20 24" fill="none" stroke="#7a7a7a">
            <path d="M.5.5h9l3 3v13H.5z" fill="#fff" />
            <path d="M3 6h7M3 9h7M3 12h7" stroke="#4a86c5" />
            <path d="M7.500 7.500h8l4 4v12h-12z" fill="#fff" />
            <path d="M10 14h7M10 17h7M10 20h7" stroke="#4a86c5" />
          </svg>
          复制条件(C)
        </PushButton>
        <ToolSep />
        <PushButton $width={38} $height={38}>
          <svg width="14" height="9" viewBox="0 0 14 9">
            <path d="M7 0l7 9H0z" fill="#adadad" />
          </svg>
        </PushButton>
        <PushButton $width={38} $height={38}>
          <svg width="14" height="9" viewBox="0 0 14 9">
            <path d="M0 0h14L7 9z" fill="#adadad" />
          </svg>
        </PushButton>
        <PushButton $width={102} $height={38}>
          选项(O)...
        </PushButton>
        <CheckRow>
          <CheckBox>
            <svg width="15" height="13" viewBox="0 0 15 13" fill="none" stroke="#222" strokeWidth="1.400">
              <path d="M1 7l4 5L14 1" />
            </svg>
          </CheckBox>
          数据包含标题(H)
        </CheckRow>
      </SortToolbar>
      <SortTable>
        <SortHeadRow>
          <SortHeadCell $width={268}>排序依据</SortHeadCell>
          <SortHeadCell $width={280}>次序</SortHeadCell>
        </SortHeadRow>
        <SortSelects>
          <SortSelect $width={252}>
            <SelectValue>单元格值</SelectValue>
            <SelectButton>
              <Chevron />
            </SelectButton>
          </SortSelect>
          <SortSelect $width={278}>
            <SelectValue>自定义序列...</SelectValue>
            <SelectButton>
              <Chevron />
            </SelectButton>
          </SortSelect>
        </SortSelects>
      </SortTable>
      <DialogFooter $gap={16} $pad={8}>
        <PushButton $width={111} $height={38}>
          确定
        </PushButton>
        <PushButton $width={111} $height={38}>
          取消
        </PushButton>
      </DialogFooter>
    </SortBody>
    <ResizeGrip width="10" height="10" viewBox="0 0 10 10" fill="#b0b0b0">
      <rect x="7" y="1" width="2" height="2" />
      <rect x="4" y="4" width="2" height="2" />
      <rect x="7" y="4" width="2" height="2" />
      <rect x="1" y="7" width="2" height="2" />
      <rect x="4" y="7" width="2" height="2" />
      <rect x="7" y="7" width="2" height="2" />
    </ResizeGrip>
  </Dialog>
);

const ListDialog = () => (
  <Dialog $left={351} $top={72} $width={866} $height={689}>
    <DialogHead>
      自定义序列
      <HelpMark>?</HelpMark>
      <CloseCross color="#333" size={16} />
    </DialogHead>
    <ListDialogBody>
      <TabHead>自定义序列</TabHead>
      <TabPanel>
        <ListsRow>
          <ListColumn $width={317}>
            <FieldLabel>自定义序列(L):</FieldLabel>
            <ListBox $height={292}>
              <ListItems>
                {seriesList.map((s, i) => (
                  <ListItem key={s} $selected={i === seriesList.length - 1}>
                    {s}
                  </ListItem>
                ))}
              </ListItems>
              <ListScroll>
                <ListScrollGap $height={49} $pad={11}>
                  <ListUp />
                </ListScrollGap>
                <ScrollRest style={{ flex: "none", height: 24 }} />
                <ListThumb />
                <ScrollRest />
              </ListScroll>
            </ListBox>
            <Hint>按 Enter 分隔列表条目。</Hint>
          </ListColumn>
          <ListColumn $width={336}>
            <FieldLabel>输入序列(E):</FieldLabel>
            <ListBox $height={293}>
              <ListItems>
                <EntryItem>一系</EntryItem>
                <EntryItem>二系</EntryItem>
                <EntryItem>三系</EntryItem>
                <EntryItem>四系</EntryItem>
              </ListItems>
              <ListScroll>
                <ListScrollGap $height={49} $pad={11}>
                  <ListUp color="#c0c0c0" />
                </ListScrollGap>
                <ScrollRest />
                <ListScrollGap $height={32} $pad={15}>
                  <ListDown color="#c0c0c0" />
                </ListScrollGap>
              </ListScroll>
            </ListBox>
          </ListColumn>
          <SideButtons>
            <PushButton $width={131} $height={41}>
              添加(A)
            </PushButton>
            <PushButton $width={131} $height={41}>
              删除(D)
            </PushButton>
          </SideButtons>
        </ListsRow>
      </TabPanel>
      <DialogFooter $gap={16} $pad={18}>
        <PushButton $width={124} $height={40} $focus>
          确定
        </PushButton>
        <PushButton $width={123} $height={40}>
          取消
        </PushButton>
      </DialogFooter>
    </ListDialogBody>
  </Dialog>
);

const Annotations = () => (
  <>
    <ArrowLayer width="1920" height="1031" viewBox="0 0 1920 1031">
      <polygon points="1488,363.500 1200,403.500 684,481 678,477 660,490 680,498 684,492 1200,408.500 1488,364" fill="#f43d3d" />
      <polygon points="676,498 922.200,680.400 926,676 937,697 913,692 916.800,687.600" fill="#f43d3d" />
    </ArrowLayer>
    <RedBox />
    <RedNote $left={1507} $top={371}>
      选中自定义序列
    </RedNote>
    <RedNote $left={763} $top={414}>
      选中刚导入的排序顺序
    </RedNote>
  </>
);

const App: React.FC = () => (
  <Page>
    <GlobalStyle />
    <Header />
    <RibbonSection />
    <FormulaSection />
    <SheetSection />
    <TabsSection />
    <StatusSection />
    <Taskbar>
      <Clock>9:45</Clock>
    </Taskbar>
    <SortDialog />
    <ListDialog />
    <Annotations />
  </Page>
);

export default App;
